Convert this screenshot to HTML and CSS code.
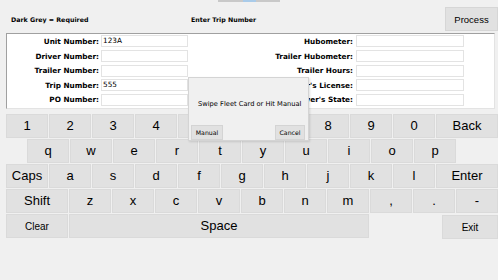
FILE: index.html
```html
<!DOCTYPE html>
<html>
<head>
<meta charset="utf-8">
<link rel="stylesheet" href="styles.css">
</head>
<body>
<div class="tab"><span class="tab-thumb"></span></div>
<div class="app">
  <div class="header">
    <span class="hint">Dark Grey = Required</span>
    <span class="title">Enter Trip Number</span>
    <button class="process">Process</button>
  </div>
  <div class="panel">
    <div class="col col-left">
      <div class="row"><label>Unit Number:</label><div class="field">123A</div></div>
      <div class="row"><label>Driver Number:</label><div class="field"></div></div>
      <div class="row"><label>Trailer Number:</label><div class="field"></div></div>
      <div class="row"><label>Trip Number:</label><div class="field">555</div></div>
      <div class="row"><label>PO Number:</label><div class="field"></div></div>
    </div>
    <div class="col col-right">
      <div class="row"><label>Hubometer:</label><div class="field"></div></div>
      <div class="row"><label>Trailer Hubometer:</label><div class="field"></div></div>
      <div class="row"><label>Trailer Hours:</label><div class="field"></div></div>
      <div class="row"><label>Driver's License:</label><div class="field"></div></div>
      <div class="row"><label>Driver's State:</label><div class="field"></div></div>
    </div>
  </div>
  <div class="keyboard">
    <div class="krow">
      <div class="key">1</div><div class="key">2</div><div class="key">3</div><div class="key">4</div><div class="key">5</div><div class="key">6</div><div class="key">7</div><div class="key">8</div><div class="key">9</div><div class="key">0</div><div class="key wide">Back</div>
    </div>
    <div class="krow indent">
      <div class="key">q</div><div class="key">w</div><div class="key">e</div><div class="key">r</div><div class="key">t</div><div class="key">y</div><div class="key">u</div><div class="key">i</div><div class="key">o</div><div class="key">p</div>
    </div>
    <div class="krow">
      <div class="key">Caps</div><div class="key">a</div><div class="key">s</div><div class="key">d</div><div class="key">f</div><div class="key">g</div><div class="key">h</div><div class="key">j</div><div class="key">k</div><div class="key">l</div><div class="key wide">Enter</div>
    </div>
    <div class="krow">
      <div class="key wide">Shift</div><div class="key">z</div><div class="key">x</div><div class="key">c</div><div class="key">v</div><div class="key">b</div><div class="key">n</div><div class="key">m</div><div class="key">,</div><div class="key">.</div><div class="key">-</div>
    </div>
    <div class="krow">
      <div class="key wide small">Clear</div><div class="key space">Space</div><div class="key exit small">Exit</div>
    </div>
  </div>
</div>
<div class="dialog">
  <div class="dialog-msg">Swipe Fleet Card or Hit Manual</div>
  <div class="dialog-buttons">
    <button class="dbtn manual">Manual</button>
    <button class="dbtn cancel">Cancel</button>
  </div>
</div>
</body>
</html>
```
FILE: styles.css
```css
html, body {
  margin: 0;
  padding: 0;
}
body {
  width: 498px;
  height: 280px;
  overflow: hidden;
  background: #f0f0f0;
  font-family: "DejaVu Sans", Verdana, sans-serif;
  color: #000;
  position: relative;
}
.tab {
  position: absolute;
  left: 218px;
  top: 0;
  width: 62px;
  height: 2px;
  background: #c9c9c9;
}
.tab-thumb {
  display: block;
  margin-left: 25px;
  width: 13px;
  height: 2px;
  background: #a9cbe9;
}
.app {
  padding-left: 6px;
  width: 492px;
}
.header {
  display: flex;
  align-items: center;
  height: 33px;
  padding-top: 5px;
  box-sizing: border-box;
}
.hint, .title {
  font-weight: bold;
  font-size: 6.3px;
}
.hint {
  margin-left: 5px;
  width: 180px;
}
.title {
  flex: 1;
}
.process {
  width: 53px;
  height: 24px;
  margin: 0;
  border: 1px solid #d6d6d6;
  background: #e1e1e1;
  font-family: "Liberation Sans", Arial, sans-serif;
  font-size: 9.5px;
  color: #000;
  padding: 0;
}
.panel {
  display: flex;
  width: 489px;
  height: 76px;
  box-sizing: border-box;
  background: #fff;
  border-left: 1px solid #a0a0a0;
  border-top: 1px solid #a0a0a0;
  border-right: 1px solid #e3e3e3;
  border-bottom: 1px solid #e3e3e3;
  padding-top: 0.2px;
}
.col {
  display: flex;
  flex-direction: column;
}
.row {
  display: flex;
  align-items: center;
  height: 14.6px;
}
.row label {
  font-weight: bold;
  font-size: 7.3px;
  text-align: right;
  white-space: nowrap;
}
.field {
  height: 12px;
  box-sizing: border-box;
  border: 1px solid #e3e3e3;
  background: #fff;
  font-size: 7.3px;
  line-height: 10px;
  padding-left: 1px;
}
.col-left label {
  width: 92px;
  margin-right: 2px;
}
.col-left .field {
  width: 87px;
}
.col-right {
  margin-left: 14px;
}
.col-right label {
  width: 151px;
  margin-right: 3px;
}
.col-right .field {
  width: 108px;
}
.keyboard {
  margin-top: 5px;
  display: flex;
  flex-direction: column;
  gap: 1px;
}
.krow {
  display: flex;
  gap: 1px;
  height: 24px;
}
.krow.indent {
  padding-left: 21px;
}
.key {
  width: 42px;
  flex: none;
  height: 24px;
  box-sizing: border-box;
  background: #e1e1e1;
  border: 1px solid #dadada;
  display: flex;
  align-items: center;
  justify-content: center;
  font-family: "Liberation Sans", Arial, sans-serif;
  font-size: 13px;
  padding-bottom: 2px;
}
.key.wide {
  width: 62px;
}
.key.small {
  font-size: 10px;
  padding-bottom: 0;
}
.key.space {
  width: 300px;
}
.key.exit {
  width: 56px;
  margin-left: 72px;
  margin-top: 1px;
}
.dialog {
  position: absolute;
  left: 188px;
  top: 77px;
  width: 121px;
  height: 64px;
  box-sizing: border-box;
  background: #f0f0f0;
  border: 1px solid #d4d4d4;
  box-shadow: 1px 1px 2px rgba(0,0,0,0.12);
  display: flex;
  flex-direction: column;
}
.dialog-msg {
  font-size: 6.7px;
  padding-left: 9px;
  padding-top: 22px;
  height: 24px;
}
.dialog-buttons {
  display: flex;
  justify-content: space-between;
  padding: 0 3px 0 2px;
  margin-top: 1px;
}
.dbtn {
  height: 15px;
  margin: 0;
  padding: 0;
  background: #e1e1e1;
  border: 1px solid #d4d4d4;
  font-family: "DejaVu Sans", Verdana, sans-serif;
  font-size: 6.2px;
  color: #000;
}
.dbtn.manual {
  width: 32px;
}
.dbtn.cancel {
  width: 30px;
}
```
